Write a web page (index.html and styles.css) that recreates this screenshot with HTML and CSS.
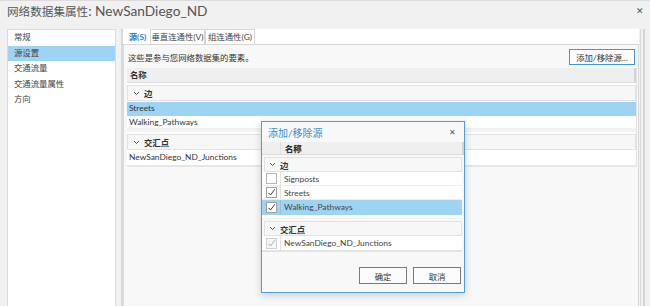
FILE: index.html
```html
<!DOCTYPE html>
<html lang="zh">
<head>
<meta charset="utf-8">
<title>网络数据集属性</title>
<link rel="stylesheet" href="styles.css">
</head>
<body>
<div class="window">
  <div class="titlebar">
    <span class="title">网络数据集属性<span class="lat">: NewSanDiego_ND</span></span>
    <span class="close">✕</span>
  </div>
  <div class="main">
    <ul class="nav">
      <li>常规</li>
      <li class="sel">源设置</li>
      <li>交通流量</li>
      <li>交通流量属性</li>
      <li>方向</li>
    </ul>
    <div class="splitter"></div>
    <div class="panel">
      <div class="tabs">
        <span class="tab active t1">源(S)</span>
        <span class="tab t2">垂直连通性(V)</span>
        <span class="tab t3">组连通性(G)</span>
      </div>
      <div class="content">
        <div class="toolbar">
          <span class="desc">这些是参与您网络数据集的要素。</span>
          <button class="btn focus">添加/移除源...</button>
        </div>
        <div class="table">
          <div class="thead">名称</div>
          <div class="group"><svg class="chev" width="7" height="5" viewBox="0 0 7 5"><path d="M1 1 L3.5 3.5 L6 1" fill="none" stroke="#555" stroke-width="1"/></svg><b>边</b></div>
          <div class="row sel">Streets</div>
          <div class="row">Walking_Pathways</div>
          <div class="gap"></div>
          <div class="group"><svg class="chev" width="7" height="5" viewBox="0 0 7 5"><path d="M1 1 L3.5 3.5 L6 1" fill="none" stroke="#555" stroke-width="1"/></svg><b>交汇点</b></div>
          <div class="row last">NewSanDiego_ND_Junctions</div>
        </div>
      </div>
    </div>
    <div class="edge"></div>
  </div>

  <div class="dialog">
    <div class="dtitle">
      <span>添加/移除源</span>
      <span class="dclose">✕</span>
    </div>
    <div class="dhead"><span class="ccol"></span><b>名称</b></div>
    <div class="dgroup"><svg class="chev" width="7" height="5" viewBox="0 0 7 5"><path d="M1 1 L3.5 3.5 L6 1" fill="none" stroke="#555" stroke-width="1"/></svg><b>边</b></div>
    <div class="drow"><span class="ccol"><span class="cb"></span></span><span class="name">Signposts</span></div>
    <div class="drow"><span class="ccol"><span class="cb on"><svg width="9" height="9" viewBox="0 0 9 9"><path d="M1.5 4.8 L3.5 7 L7.8 1.2" fill="none" stroke="#444" stroke-width="1"/></svg></span></span><span class="name">Streets</span></div>
    <div class="drow sel"><span class="ccol"><span class="cb on"><svg width="9" height="9" viewBox="0 0 9 9"><path d="M1.5 4.8 L3.5 7 L7.8 1.2" fill="none" stroke="#444" stroke-width="1"/></svg></span></span><span class="name">Walking_Pathways</span></div>
    <div class="dgap"></div>
    <div class="dgroup"><svg class="chev" width="7" height="5" viewBox="0 0 7 5"><path d="M1 1 L3.5 3.5 L6 1" fill="none" stroke="#555" stroke-width="1"/></svg><b>交汇点</b></div>
    <div class="drow last"><span class="ccol"><span class="cb dis"><svg width="9" height="9" viewBox="0 0 9 9"><path d="M1.5 4.8 L3.5 7 L7.8 1.2" fill="none" stroke="#aaa" stroke-width="1"/></svg></span></span><span class="name">NewSanDiego_ND_Junctions</span></div>
    <div class="dfoot">
      <button class="btn dbtn">确定</button>
      <button class="btn dbtn">取消</button>
    </div>
  </div>
</div>
</body>
</html>
```

FILE: styles.css
```css
* { box-sizing: border-box; }
html, body { margin: 0; padding: 0; }
body {
  width: 650px;
  height: 306px;
  overflow: hidden;
  background: #f1f1f1;
  font-family: Lato, "Noto Sans CJK SC", sans-serif;
  font-size: 8.4px;
  color: #333;
}
.window {
  position: relative;
  width: 650px;
  height: 306px;
  border-top: 1px solid #dcdcdc;
}
.titlebar {
  height: 28px;
  display: flex;
  align-items: center;
  justify-content: space-between;
  padding: 0 6px 9px 7px;
}
.title {
  font-size: 11.6px;
  color: #555;
}
.title .lat {
  font-size: 13.7px;
}
.close {
  font-size: 9px;
  color: #555;
}
.main {
  display: flex;
  height: 277px;
}
.nav {
  list-style: none;
  margin: 0 0 0 7px;
  padding: 0;
  width: 109px;
  background: #fff;
  border: 1px solid #dadada;
  border-bottom: none;
}
.nav li {
  height: 15.5px;
  line-height: 14.5px;
  padding-left: 6px;
  color: #444;
}
.nav li.sel { background: #9fd3f3; }
.splitter {
  width: 7px;
  border-right: 2px solid #dadada;
}
.panel {
  width: 516px;
  display: flex;
  flex-direction: column;
  background: #f8f8f8;
}
.tabs {
  display: flex;
  align-items: flex-end;
  height: 16px;
  background: #fff;
  border-bottom: 1px solid #d6d6d6;
  padding-left: 2px;
}
.tab {
  height: 15px;
  line-height: 14px;
  border: 1px solid #d6d6d6;
  border-bottom: none;
  color: #444;
  background: #fff;
  text-align: center;
}
.t1 { width: 25px; }
.t2 { width: 55px; }
.t3 { width: 50px; }
.tab.active {
  color: #2a7fc9;
  font-weight: 700;
  border-color: #fff;
}
.content {
  flex: 1;
  border-left: 1px solid #dadada;
  border-right: 1px solid #dadada;
  padding: 3px 1px 0 3px;
}
.toolbar {
  display: flex;
  align-items: center;
  justify-content: space-between;
  height: 17px;
  margin-bottom: 3px;
  padding-left: 1px;
}
.btn {
  font-family: Lato, "Noto Sans CJK SC", sans-serif;
  font-size: 8.4px;
  color: #333;
  background: #fdfdfd;
  border: 1px solid #888;
  padding: 0;
  height: 16px;
}
.btn.focus {
  width: 66px;
  border: 1px solid #3d98dc;
  margin-right: 2px;
}
.table {
  display: flex;
  flex-direction: column;
  background: #fff;
  border-right: 1px solid #e3e3e3;
}
.thead {
  height: 15px;
  line-height: 15px;
  background: #efefef;
  border-bottom: 1px solid #dcdcdc;
  border-right: 2px solid #d4d4d4;
  font-weight: 700;
  padding-left: 3px;
  color: #333;
}
.group {
  height: 16px;
  display: flex;
  align-items: center;
  background: #f7f7f7;
  border: 1px solid #e2e2e2;
  margin: 2px 0 1px 0;
  padding-left: 5px;
  color: #333;
}
.group .chev { margin-right: 4px; }
.group b { font-weight: 700; }
.row {
  height: 13.5px;
  line-height: 13.5px;
  padding-left: 2px;
  border-bottom: 1px solid #f0f0f0;
}
.row.sel { background: #9fd3f3; border-bottom-color: #9fd3f3; }
.row.last { border-bottom: 2px solid #e6e6e6; height: 16px; }
.gap { height: 3px; background: #f4f4f4; }
.edge {
  width: 5px;
  border-left: 1px solid #dadada;
  border-right: 2px solid #d6d6d6;
  margin-left: 1px;
}

/* dialog */
.dialog {
  position: absolute;
  left: 261px;
  top: 120px;
  width: 204px;
  height: 172px;
  background: #f8f8f8;
  border: 1px solid #4d9fd9;
  box-shadow: 0 2px 8px rgba(0,0,0,0.18);
  display: flex;
  flex-direction: column;
}
.dtitle {
  height: 20px;
  display: flex;
  align-items: center;
  justify-content: space-between;
  padding: 0 8px 0 6px;
  color: #3a8dd0;
  font-size: 10px;
}
.dclose { font-size: 8px; color: #555; }
.dhead {
  height: 13px;
  display: flex;
  align-items: center;
  background: #efefef;
  border-bottom: 1px solid #dcdcdc;
  border-right: 2px solid #d6d6d6;
  font-weight: 700;
}
.ccol {
  width: 19px;
  height: 100%;
  display: flex;
  align-items: center;
  justify-content: center;
  border-right: 1px solid #e2e2e2;
  flex: none;
}
.dhead b { padding-left: 4px; }
.dgroup {
  height: 15px;
  display: flex;
  align-items: center;
  background: #f7f7f7;
  border: 1px solid #e2e2e2;
  margin: 2px 2px 0 2px;
  padding-left: 4px;
}
.dgroup .chev { margin-right: 4px; }
.drow {
  height: 14px;
  display: flex;
  align-items: center;
  background: #fff;
  border-bottom: 1px solid #ececec;
  margin-right: 2px;
}
.drow.sel { background: #9fd3f3; border-bottom-color: #9fd3f3; height: 15px; }
.drow.sel .ccol { border-right-color: #8cc3e6; }
.drow.last { height: 16px; border-bottom: 2px solid #e3e3e3; }
.name { padding-left: 3px; color: #444; }
.cb {
  width: 11px;
  height: 11px;
  border: 1px solid #b5b5b5;
  background: #fff;
  display: flex;
  align-items: center;
  justify-content: center;
}
.cb.on { border-color: #a0a0a0; }
.cb.dis { border-color: #cfcfcf; background: #f6f6f6; }
.dgap { height: 4px; background: #fff; border-bottom: 1px solid #f0f0f0; margin-right: 2px; }
.dfoot {
  flex: 1;
  display: flex;
  justify-content: flex-end;
  align-items: flex-end;
  gap: 6px;
  padding: 0 3px 8px 0;
}
.dbtn {
  width: 48px;
  height: 17px;
  border: 1px solid #7a7a7a;
  background: #fcfcfc;
}
```
